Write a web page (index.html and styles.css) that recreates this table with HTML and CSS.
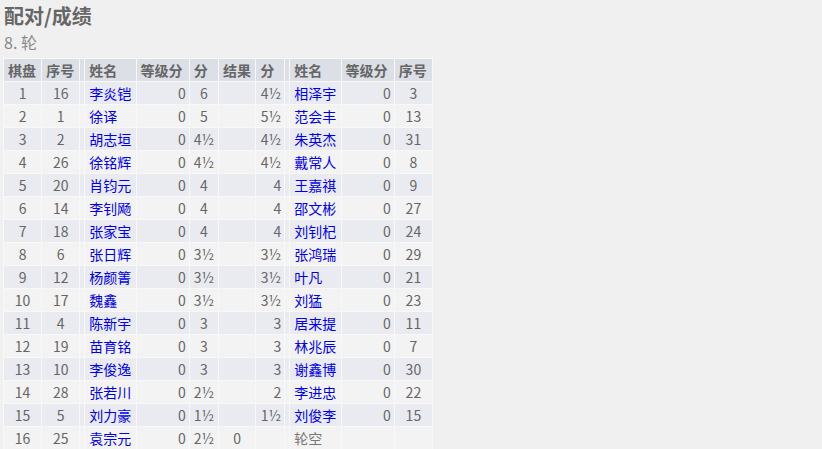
FILE: index.html
```html
<!DOCTYPE html>
<html lang="zh-CN">
<head>
<meta charset="utf-8">
<title>配对/成绩</title>
<link rel="stylesheet" href="styles.css">
</head>
<body>
<div class="page">
  <h1 class="title">配对/成绩</h1>
  <h2 class="round">8. 轮</h2>
  <table class="pairs">
    <colgroup>
      <col class="c-board"><col class="c-no"><col class="c-sep"><col class="c-name"><col class="c-rating"><col class="c-pts">
      <col class="c-res"><col class="c-pts"><col class="c-sep"><col class="c-name"><col class="c-rating"><col class="c-no">
    </colgroup>
    <thead>
      <tr><th>棋盘</th><th>序号</th><th></th><th>姓名</th><th>等级分</th><th>分</th><th>结果</th><th>分</th><th></th><th>姓名</th><th>等级分</th><th>序号</th></tr>
    </thead>
    <tbody>
      <tr><td class="ctr">1</td><td class="ctr">16</td><td></td><td><a href="#">李炎铠</a></td><td class="rt">0</td><td class="ctr">6</td><td class="ctr"></td><td class="rt">4½</td><td></td><td><a href="#">相泽宇</a></td><td class="rt">0</td><td class="ctr">3</td></tr>
      <tr><td class="ctr">2</td><td class="ctr">1</td><td></td><td><a href="#">徐译</a></td><td class="rt">0</td><td class="ctr">5</td><td class="ctr"></td><td class="rt">5½</td><td></td><td><a href="#">范会丰</a></td><td class="rt">0</td><td class="ctr">13</td></tr>
      <tr><td class="ctr">3</td><td class="ctr">2</td><td></td><td><a href="#">胡志垣</a></td><td class="rt">0</td><td class="ctr">4½</td><td class="ctr"></td><td class="rt">4½</td><td></td><td><a href="#">朱英杰</a></td><td class="rt">0</td><td class="ctr">31</td></tr>
      <tr><td class="ctr">4</td><td class="ctr">26</td><td></td><td><a href="#">徐铭辉</a></td><td class="rt">0</td><td class="ctr">4½</td><td class="ctr"></td><td class="rt">4½</td><td></td><td><a href="#">戴常人</a></td><td class="rt">0</td><td class="ctr">8</td></tr>
      <tr><td class="ctr">5</td><td class="ctr">20</td><td></td><td><a href="#">肖钧元</a></td><td class="rt">0</td><td class="ctr">4</td><td class="ctr"></td><td class="rt">4</td><td></td><td><a href="#">王嘉祺</a></td><td class="rt">0</td><td class="ctr">9</td></tr>
      <tr><td class="ctr">6</td><td class="ctr">14</td><td></td><td><a href="#">李钊飏</a></td><td class="rt">0</td><td class="ctr">4</td><td class="ctr"></td><td class="rt">4</td><td></td><td><a href="#">邵文彬</a></td><td class="rt">0</td><td class="ctr">27</td></tr>
      <tr><td class="ctr">7</td><td class="ctr">18</td><td></td><td><a href="#">张家宝</a></td><td class="rt">0</td><td class="ctr">4</td><td class="ctr"></td><td class="rt">4</td><td></td><td><a href="#">刘钊杞</a></td><td class="rt">0</td><td class="ctr">24</td></tr>
      <tr><td class="ctr">8</td><td class="ctr">6</td><td></td><td><a href="#">张日辉</a></td><td class="rt">0</td><td class="ctr">3½</td><td class="ctr"></td><td class="rt">3½</td><td></td><td><a href="#">张鸿瑞</a></td><td class="rt">0</td><td class="ctr">29</td></tr>
      <tr><td class="ctr">9</td><td class="ctr">12</td><td></td><td><a href="#">杨颜箐</a></td><td class="rt">0</td><td class="ctr">3½</td><td class="ctr"></td><td class="rt">3½</td><td></td><td><a href="#">叶凡</a></td><td class="rt">0</td><td class="ctr">21</td></tr>
      <tr><td class="ctr">10</td><td class="ctr">17</td><td></td><td><a href="#">魏鑫</a></td><td class="rt">0</td><td class="ctr">3½</td><td class="ctr"></td><td class="rt">3½</td><td></td><td><a href="#">刘猛</a></td><td class="rt">0</td><td class="ctr">23</td></tr>
      <tr><td class="ctr">11</td><td class="ctr">4</td><td></td><td><a href="#">陈新宇</a></td><td class="rt">0</td><td class="ctr">3</td><td class="ctr"></td><td class="rt">3</td><td></td><td><a href="#">居来提</a></td><td class="rt">0</td><td class="ctr">11</td></tr>
      <tr><td class="ctr">12</td><td class="ctr">19</td><td></td><td><a href="#">苗育铭</a></td><td class="rt">0</td><td class="ctr">3</td><td class="ctr"></td><td class="rt">3</td><td></td><td><a href="#">林兆辰</a></td><td class="rt">0</td><td class="ctr">7</td></tr>
      <tr><td class="ctr">13</td><td class="ctr">10</td><td></td><td><a href="#">李俊逸</a></td><td class="rt">0</td><td class="ctr">3</td><td class="ctr"></td><td class="rt">3</td><td></td><td><a href="#">谢鑫博</a></td><td class="rt">0</td><td class="ctr">30</td></tr>
      <tr><td class="ctr">14</td><td class="ctr">28</td><td></td><td><a href="#">张若川</a></td><td class="rt">0</td><td class="ctr">2½</td><td class="ctr"></td><td class="rt">2</td><td></td><td><a href="#">李进忠</a></td><td class="rt">0</td><td class="ctr">22</td></tr>
      <tr><td class="ctr">15</td><td class="ctr">5</td><td></td><td><a href="#">刘力豪</a></td><td class="rt">0</td><td class="ctr">1½</td><td class="ctr"></td><td class="rt">1½</td><td></td><td><a href="#">刘俊李</a></td><td class="rt">0</td><td class="ctr">15</td></tr>
      <tr><td class="ctr">16</td><td class="ctr">25</td><td></td><td><a href="#">袁宗元</a></td><td class="rt">0</td><td class="ctr">2½</td><td class="ctr">0</td><td class="rt"></td><td></td><td class="bye">轮空</td><td class="rt"></td><td class="ctr"></td></tr>
    </tbody>
  </table>
</div>
</body>
</html>
```

FILE: styles.css
```css
html, body {
  margin: 0;
  padding: 0;
  background: #f0f0f0;
}
body {
  font-family: "Noto Sans CJK SC", "Noto Sans", sans-serif;
  color: #666;
}
.page {
  padding: 2px 3px 0 3px;
}
.title {
  margin: 0;
  font-size: 20px;
  line-height: 28px;
  font-weight: 700;
  color: #666;
  padding-left: 1px;
}
.round {
  margin: 0;
  font-size: 16px;
  line-height: 24px;
  font-weight: 400;
  color: #888;
  padding-left: 1px;
}
.pairs {
  margin-top: 4px;
  border-collapse: separate;
  border-spacing: 1px;
  background: #f8f8f8;
  table-layout: fixed;
  width: 430px;
  font-size: 14px;
}
.c-board { width: 37px; }
.c-no { width: 37px; }
.c-sep { width: 4px; }
.c-name { width: 50px; }
.c-rating { width: 52px; }
.c-pts { width: 28px; }
.c-res { width: 36px; }
.pairs th, .pairs td {
  height: 22px;
  padding: 0 4px;
  line-height: 22px;
  white-space: nowrap;
  overflow: hidden;
}
.pairs th {
  background: #dcdfe6;
  text-align: left;
  font-weight: 700;
  color: #666;
}
.pairs th:nth-child(3), .pairs th:nth-child(9),
.pairs td:nth-child(3), .pairs td:nth-child(9) {
  padding: 0;
}
.pairs tbody tr:nth-child(odd) td { background: #e9ebf1; }
.pairs tbody tr:nth-child(even) td { background: #f3f3f3; }
.pairs td { color: #666; }
.pairs td.ctr { text-align: center; }
.pairs td.rt { text-align: right; padding-right: 3px; }
.pairs a { color: #0000ee; text-decoration: none; }
.pairs td.bye { color: #777; }
```
